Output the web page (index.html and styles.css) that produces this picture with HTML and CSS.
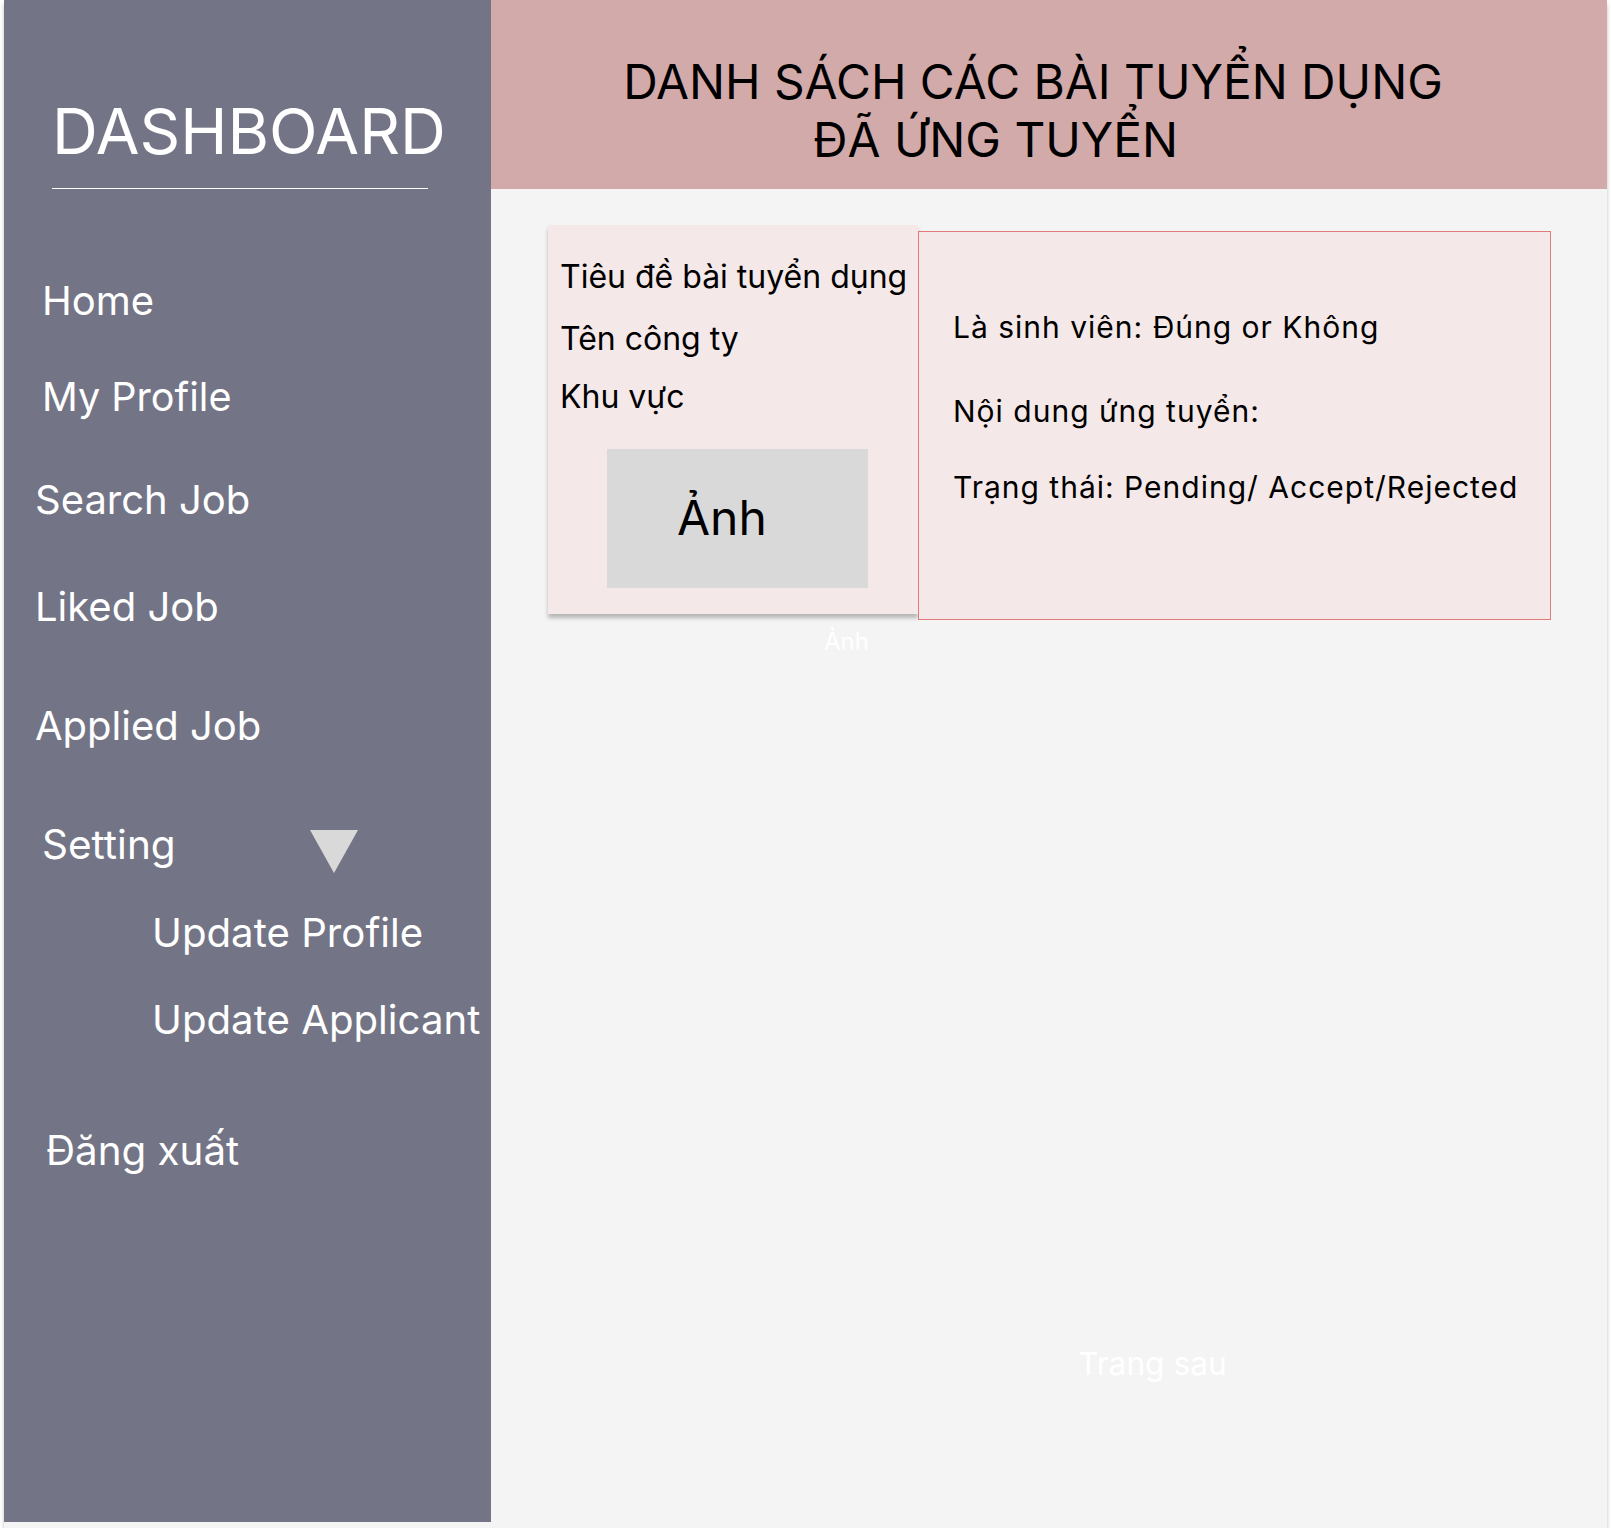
FILE: index.html
```html
<!DOCTYPE html>
<html lang="vi">
<head>
<meta charset="utf-8">
<title>Applied Job</title>
<link rel="stylesheet" href="styles.css">
</head>
<body>
<div class="frame">
  <aside class="sidebar">
    <div class="brand">
      <h1 class="brand-title">DASHBOARD</h1>
      <div class="brand-rule"></div>
    </div>
    <nav class="nav">
      <a class="nav-item item-home">Home</a>
      <a class="nav-item item-profile">My Profile</a>
      <a class="nav-item item-search">Search Job</a>
      <a class="nav-item item-liked">Liked Job</a>
      <a class="nav-item item-applied">Applied Job</a>
      <div class="nav-item item-setting">
        <span class="setting-label">Setting</span>
        <svg class="setting-caret" width="48" height="43" viewBox="0 0 48 43"><polygon points="0,0 48,0 24,43" fill="#d9d9d9"/></svg>
      </div>
      <a class="nav-item item-sub item-sub-first">Update Profile</a>
      <a class="nav-item item-sub item-sub-second">Update Applicant</a>
      <a class="nav-item item-logout">Đăng xuất</a>
    </nav>
  </aside>
  <main class="main">
    <header class="page-header">
      <h2 class="page-title">
        <span class="title-line">DANH SÁCH CÁC BÀI TUYỂN DỤNG</span>
        <span class="title-line title-line-2">ĐÃ ỨNG TUYỂN</span>
      </h2>
    </header>
    <section class="content">
      <div class="cards">
        <article class="job-card">
          <p class="job-line">Tiêu đề bài tuyển dụng</p>
          <p class="job-line job-company">Tên công ty</p>
          <p class="job-line job-area">Khu vực</p>
          <div class="job-photo">Ảnh</div>
        </article>
        <div class="apply-card">
          <p class="apply-line">Là sinh viên: Đúng or Không</p>
          <p class="apply-line apply-content">Nội dung ứng tuyển:</p>
          <p class="apply-line apply-status">Trạng thái: Pending/ Accept/Rejected</p>
        </div>
      </div>
      <div class="photo-caption">Ảnh</div>
      <div class="next-page">Trang sau</div>
    </section>
  </main>
</div>
</body>
</html>
```
FILE: styles.css
```css
* {
  box-sizing: border-box;
  margin: 0;
  padding: 0;
}

body {
  margin: 0;
  background: #ffffff;
  font-family: Inter, "Noto Sans", sans-serif;
}

.frame {
  margin-left: 4px;
  width: 1603px;
  height: 1528px;
  display: flex;
  background: #f4f4f4;
  box-shadow: 0 4px 4px rgba(0, 0, 0, 0.25);
}

.sidebar {
  width: 487px;
  height: 1522px;
  flex-shrink: 0;
  background: #737586;
  color: #ffffff;
}

.brand {
  padding: 92px 0 0 48px;
}

.brand-title {
  font-size: 63.5px;
  font-weight: 400;
  line-height: 78px;
}

.brand-rule {
  width: 376px;
  height: 1px;
  margin-top: 18px;
  background: #ffffff;
}

.nav {
  display: flex;
  flex-direction: column;
  align-items: flex-start;
  margin-top: 88px;
}

.nav-item {
  font-size: 40px;
  line-height: 48px;
  color: #ffffff;
  text-decoration: none;
}

.item-home { margin-left: 38px; }
.item-profile { margin-left: 38px; margin-top: 48px; font-size: 39.6px; }
.item-search { margin-left: 31px; margin-top: 55px; }
.item-liked { margin-left: 31px; margin-top: 59px; }
.item-applied { margin-left: 31px; margin-top: 71px; }

.item-setting {
  display: flex;
  align-items: flex-start;
  height: 48px;
  margin-left: 38px;
  margin-top: 71px;
  font-size: 40.5px;
}

.setting-label {
  width: 268px;
}

.setting-caret {
  display: block;
  flex-shrink: 0;
  margin-top: 9px;
}

.item-sub { margin-left: 148px; font-size: 40.2px; }
.item-sub-first { margin-top: 40px; }
.item-sub-second { margin-top: 39px; }
.item-logout { margin-left: 42px; margin-top: 83px; font-size: 40.3px; }

.main {
  flex: 1;
  display: flex;
  flex-direction: column;
}

.page-header {
  height: 189px;
  padding-top: 53px;
  background: #d3aaaa;
}

.page-title {
  font-size: 47.8px;
  font-weight: 400;
  line-height: 58px;
  text-align: center;
  padding-right: 32px;
  color: #000000;
}

.title-line {
  display: block;
}

.title-line-2 {
  padding-right: 75px;
}

.content {
  padding: 36px 0 0 57px;
}

.cards {
  display: flex;
  align-items: flex-start;
}

.job-card {
  width: 370px;
  height: 389px;
  padding: 32px 0 0 12px;
  background: #f5e8e8;
  box-shadow: 0 4px 4px rgba(0, 0, 0, 0.25);
}

.job-line {
  font-size: 32px;
  line-height: 40px;
  color: #000000;
}

.job-company { margin-top: 22px; }
.job-area { margin-top: 18px; }

.job-photo {
  width: 261px;
  height: 139px;
  margin: 32px 0 0 47px;
  padding: 40px 0 0 70px;
  background: #d9d9d9;
  font-size: 48px;
  line-height: 58px;
  color: #000000;
}

.apply-card {
  width: 633px;
  height: 389px;
  margin-top: 6px;
  padding: 77px 0 0 34px;
  background: #f5e8e8;
  border: 1px solid #e07b7b;
}

.apply-line {
  font-size: 30px;
  line-height: 36px;
  letter-spacing: 1px;
  color: #000000;
}

.apply-content { margin-top: 48px; }
.apply-status { margin-top: 40px; }

.photo-caption {
  margin: 7px 0 0 276px;
  font-size: 24px;
  line-height: 29px;
  color: #ffffff;
}

.next-page {
  margin: 688px 0 0 530px;
  font-size: 31.7px;
  line-height: 40px;
  color: #ffffff;
}
```
